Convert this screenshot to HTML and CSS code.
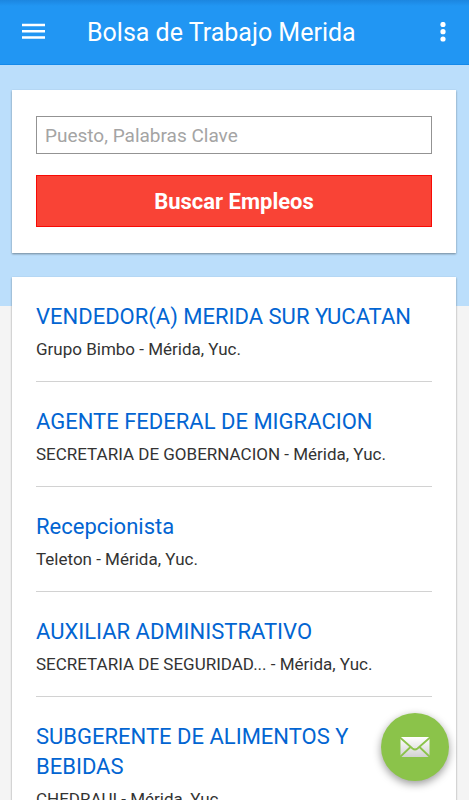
FILE: index.html
```html
<!DOCTYPE html>
<html lang="es">
<head>
    <meta charset="UTF-8">
    <meta name="viewport" content="width=device-width, initial-scale=1.0">
    <title>Bolsa de Trabajo Merida</title>
    <link rel="stylesheet" href="styles.css">
</head>
<body>
    <header class="toolbar">
        <button class="icon-btn" aria-label="Menú">
            <svg width="24" height="18" viewBox="0 0 24 18" fill="#fff">
                <path d="M0 .8h23v2.500H0zM0 7h23v2.500H0zM0 13.200h23v2.500H0z"/>
            </svg>
        </button>
        <h1>Bolsa de Trabajo Merida</h1>
        <button class="icon-btn" aria-label="Más opciones">
            <svg width="6" height="20" viewBox="0 0 6 20" fill="#fff">
                <circle cx="3" cy="2.500" r="2.600"/>
                <circle cx="3" cy="9.700" r="2.600"/>
                <circle cx="3" cy="17" r="2.600"/>
            </svg>
        </button>
    </header>

    <main class="content">
        <form class="card search">
            <input type="text" aria-label="Puesto, Palabras Clave" placeholder="Puesto, Palabras Clave">
            <button type="button" class="search-btn">Buscar Empleos</button>
        </form>

        <ul class="card jobs">
            <li class="job">
                <a href="#">VENDEDOR(A) MERIDA SUR YUCATAN</a>
                <p>Grupo Bimbo - Mérida, Yuc.</p>
            </li>
            <li class="job">
                <a href="#">AGENTE FEDERAL DE MIGRACION</a>
                <p>SECRETARIA DE GOBERNACION - Mérida, Yuc.</p>
            </li>
            <li class="job">
                <a href="#">Recepcionista</a>
                <p>Teleton - Mérida, Yuc.</p>
            </li>
            <li class="job">
                <a href="#">AUXILIAR ADMINISTRATIVO</a>
                <p>SECRETARIA DE SEGURIDAD... - Mérida, Yuc.</p>
            </li>
            <li class="job">
                <a href="#">SUBGERENTE DE ALIMENTOS Y BEBIDAS</a>
                <p>CHEDRAUI - Mérida, Yuc.</p>
            </li>
        </ul>
    </main>

    <button class="fab" aria-label="Enviar correo">
        <svg width="30" height="22" viewBox="0 0 30 22">
            <defs>
                <linearGradient id="paper" x1="0" y1="0" x2="0" y2="1">
                    <stop offset="0" stop-color="#ffffff"/>
                    <stop offset="1" stop-color="#d2d2d2"/>
                </linearGradient>
            </defs>
            <rect x="0.5" y="1" width="29" height="20" rx="1" fill="url(#paper)"/>
            <path d="M0 1.500L12.500 12.500Q15 14.500 17.500 12.500L30 1.500M0 21L10.500 11M30 21L19.500 11" fill="none" stroke="#8bc34a" stroke-width="1.800"/>
        </svg>
    </button>
</body>
</html>
```

FILE: styles.css
```css
:root {
    --primary: #2196f3;
    --primary-light: #bbdefb;
    --link: #0265d2;
    --danger: #f94336;
    --accent: #8bc34a;
}

* {
    box-sizing: border-box;
    margin: 0;
    padding: 0;
    font-family: Roboto, "Liberation Sans", sans-serif;
}

body {
    background: linear-gradient(var(--primary-light), var(--primary-light)) no-repeat #f4f4f4;
    background-size: 100% 306px;
    color: #333;
}

button {
    border: none;
    cursor: pointer;
}

.toolbar {
    display: flex;
    align-items: center;
    gap: 41px;
    height: 65px;
    padding: 0 23px 0 22px;
    background: linear-gradient(#1c86e0, var(--primary) 6px);
    border-bottom: 1px solid #1489ea;
    color: white;
}

.toolbar h1 {
    flex: 1;
    font-size: 25px;
    font-weight: 400;
    white-space: nowrap;
}

.icon-btn {
    display: flex;
    background: none;
}

.content {
    display: flex;
    flex-direction: column;
    gap: 24px;
    padding: 25px 13px 24px 12px;
}

.card {
    padding: 0 24px;
    background: white;
    box-shadow: 0 1px 2px rgba(0, 0, 0, 0.4);
}

.search {
    display: flex;
    flex-direction: column;
    gap: 21px;
    padding-top: 26px;
    padding-bottom: 26px;
}

.search input {
    width: 100%;
    height: 38px;
    padding: 0 8px;
    border: 1px solid #939393;
    font-size: 19px;
    color: #333;
}

.search input::placeholder {
    color: #a4a4a4;
}

.search-btn {
    height: 52px;
    background-color: var(--danger);
    border: 1px solid #f80a05;
    color: white;
    font-size: 22px;
    font-weight: 700;
}

.jobs {
    list-style: none;
}

.job {
    padding: 25px 0 20px;
    border-bottom: 1px solid #d2d2d2;
}

.job:last-child {
    border-bottom: none;
}

.job a {
    display: block;
    margin-bottom: 5px;
    color: var(--link);
    font-size: 22px;
    line-height: 30px;
    text-decoration: none;
}

.job p {
    font-size: 17px;
    line-height: 24px;
}

.fab {
    display: flex;
    align-items: center;
    justify-content: center;
    position: fixed;
    right: 20px;
    bottom: 19px;
    width: 68px;
    height: 68px;
    border-radius: 50%;
    background-color: var(--accent);
    box-shadow: 0 3px 8px rgba(0, 0, 0, 0.4);
}
```
